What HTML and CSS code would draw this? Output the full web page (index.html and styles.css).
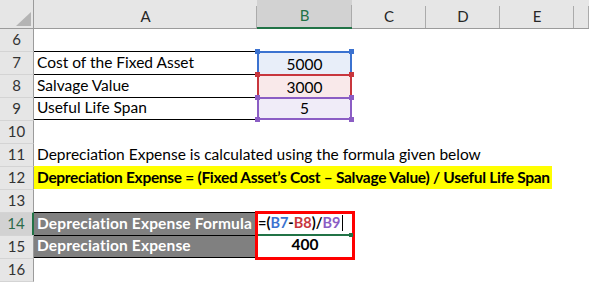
FILE: index.html
```html
<!DOCTYPE html>
<html>
<head>
<meta charset="utf-8">
<link rel="stylesheet" href="styles.css">
</head>
<body>
<div class="sheet">
  <div class="corner"><svg width="15" height="14" viewBox="0 0 15 14"><polygon points="15,0 15,14 0,14" fill="#b4b4b4"/></svg></div>
  <div class="ch">A</div>
  <div class="ch sel">B</div>
  <div class="ch">C</div>
  <div class="ch">D</div>
  <div class="ch">E</div>
  <div class="ch"></div>

  <div class="rh first">6</div>
  <div class="blank span-all"></div>

  <div class="rh">7</div>
  <div class="c boxed">Cost of the Fixed Asset</div>
  <div class="c ref blue">5000<span class="h tl"></span><span class="h tr"></span></div>
  <div class="blank span-rest"></div>

  <div class="rh">8</div>
  <div class="c boxed">Salvage Value</div>
  <div class="c ref red">3000<span class="h tl"></span><span class="h tr"></span></div>
  <div class="blank span-rest"></div>

  <div class="rh">9</div>
  <div class="c boxed boxed-last">Useful Life Span</div>
  <div class="c ref purple ref-last">5<span class="h tl"></span><span class="h tr"></span><span class="h bl"></span><span class="h br"></span></div>
  <div class="blank span-rest"></div>

  <div class="rh">10</div>
  <div class="blank span-all"></div>

  <div class="rh">11</div>
  <div class="c span-all">Depreciation Expense is calculated using the formula given below</div>

  <div class="rh">12</div>
  <div class="c span-all hl-cell"><span class="hl">Depreciation Expense = (Fixed Asset’s Cost – Salvage Value) / Useful Life Span</span></div>

  <div class="rh">13</div>
  <div class="blank span-all"></div>

  <div class="rh rh-sel">14</div>
  <div class="c dark">Depreciation Expense Formula</div>
  <div class="c result-top"><span class="formula">=(<span class="f-blue">B7</span>-<span class="f-red">B8</span>)/<span class="f-purple">B9</span></span><span class="caret"></span><span class="active"></span><span class="active-handle"></span></div>
  <div class="blank span-rest"></div>

  <div class="rh">15</div>
  <div class="c dark dark-last">Depreciation Expense</div>
  <div class="c result-bottom">400</div>
  <div class="blank span-rest"></div>

  <div class="rh">16</div>
  <div class="blank span-all"></div>

  <div class="rh"></div>
  <div class="blank span-all"></div>
</div>
</body>
</html>
```

FILE: styles.css
```css
* { box-sizing: border-box; }

html, body {
  margin: 0;
  padding: 0;
  background: #ffffff;
  overflow: hidden;
}

.sheet {
  width: 589px;
  height: 282px;
  overflow: hidden;
  display: grid;
  grid-template-columns: 34px 223px 95px 74px 74px 74px 15px;
  grid-template-rows: 29px 22px repeat(11, 23px);
  font-family: "Lato", "Liberation Sans", sans-serif;
  font-size: 15.5px;
  color: #000000;
}

.corner {
  background: #e6e6e6;
  border-right: 1px solid #9b9b9b;
  border-bottom: 1px solid #9b9b9b;
  display: flex;
  justify-content: flex-end;
  align-items: flex-end;
  padding: 0 2px 2px 0;
}

.ch {
  background: linear-gradient(#ababab, #ababab) no-repeat right bottom / 1px 22px, #e6e6e6;
  border-bottom: 1px solid #9b9b9b;
  display: flex;
  justify-content: center;
  align-items: center;
  padding-top: 3px;
  color: #262626;
  font-size: 15px;
}

.ch.sel {
  background: linear-gradient(#ababab, #ababab) no-repeat right bottom / 1px 22px, #d2d2d2;
  border-bottom: 2px solid #217346;
  color: #217346;
}

.rh {
  background: #e6e6e6;
  border-right: 1px solid #9b9b9b;
  border-top: 1px solid #d4d4d4;
  display: flex;
  justify-content: center;
  align-items: flex-end;
  padding-bottom: 3px;
  line-height: 18px;
  color: #333333;
  font-size: 15px;
}

.rh.first { border-top: 0; }

.rh.rh-sel {
  background: #d2d2d2;
  border-right: 2px solid #217346;
  color: #2c6b4a;
}

.span-all { grid-column: 2 / 8; }
.span-rest { grid-column: 4 / 8; }

.c {
  display: flex;
  align-items: flex-end;
  padding: 0 3px 3px;
  line-height: 18px;
  white-space: nowrap;
  overflow: visible;
}

.boxed { border-top: 1px solid #000000; }
.boxed-last { border-bottom: 1px solid #000000; }

.ref {
  position: relative;
  justify-content: center;
  border: 2px solid var(--rc);
  border-bottom: 0;
  background: var(--fill);
  padding-bottom: 1px;
}

.ref-last {
  border-bottom: 2px solid var(--rc);
  padding-bottom: 1px;
}

.blue { --rc: #3b72d0; --fill: #e8eef9; }
.red { --rc: #c8363d; --fill: #f9e9ea; }
.purple { --rc: #8b5dc4; --fill: #f0ecf8; }

.h {
  position: absolute;
  width: 5px;
  height: 5px;
  background: var(--rc);
}
.h.tl { top: -4px; left: -4px; }
.h.tr { top: -4px; right: -4px; }
.h.bl { bottom: -4px; left: -4px; }
.h.br { bottom: -4px; right: -4px; }

.hl-cell { padding-left: 0; padding-right: 0; align-items: stretch; padding-bottom: 0; }
.hl {
  background: #ffff00;
  font-weight: 700;
  letter-spacing: -0.3px;
  padding: 0 2px 3px 3px;
  display: flex;
  align-items: flex-end;
}

.dark {
  background: #808080;
  color: #ffffff;
  font-weight: 700;
  letter-spacing: 0.15px;
  border-top: 1px solid #000000;
}
.dark-last { border-bottom: 1px solid #000000; }

.result-top {
  position: relative;
  border: 3px solid #ff0000;
  border-bottom: 0;
  margin-left: -2px;
  margin-right: -3px;
  margin-top: -1px;
  padding-left: 0;
  padding-bottom: 3px;
  font-weight: 700;
  font-size: 14.5px;
}

.result-bottom {
  border: 3px solid #ff0000;
  border-top: 0;
  margin-left: -2px;
  margin-right: -3px;
  margin-bottom: -2px;
  justify-content: center;
  font-weight: 700;
  padding-bottom: 4px;
}

.f-blue { color: #3b72d0; }
.f-red { color: #c8363d; }
.f-purple { color: #8b5dc4; }

.caret {
  width: 1px;
  height: 16px;
  background: #000000;
  margin-left: 2px;
  margin-bottom: 1px;
}

.active {
  position: absolute;
  left: 0;
  right: 0;
  bottom: -1px;
  height: 2px;
  background: #217346;
}

.active-handle {
  position: absolute;
  right: -1px;
  bottom: -2px;
  width: 4px;
  height: 4px;
  background: #217346;
}
```
